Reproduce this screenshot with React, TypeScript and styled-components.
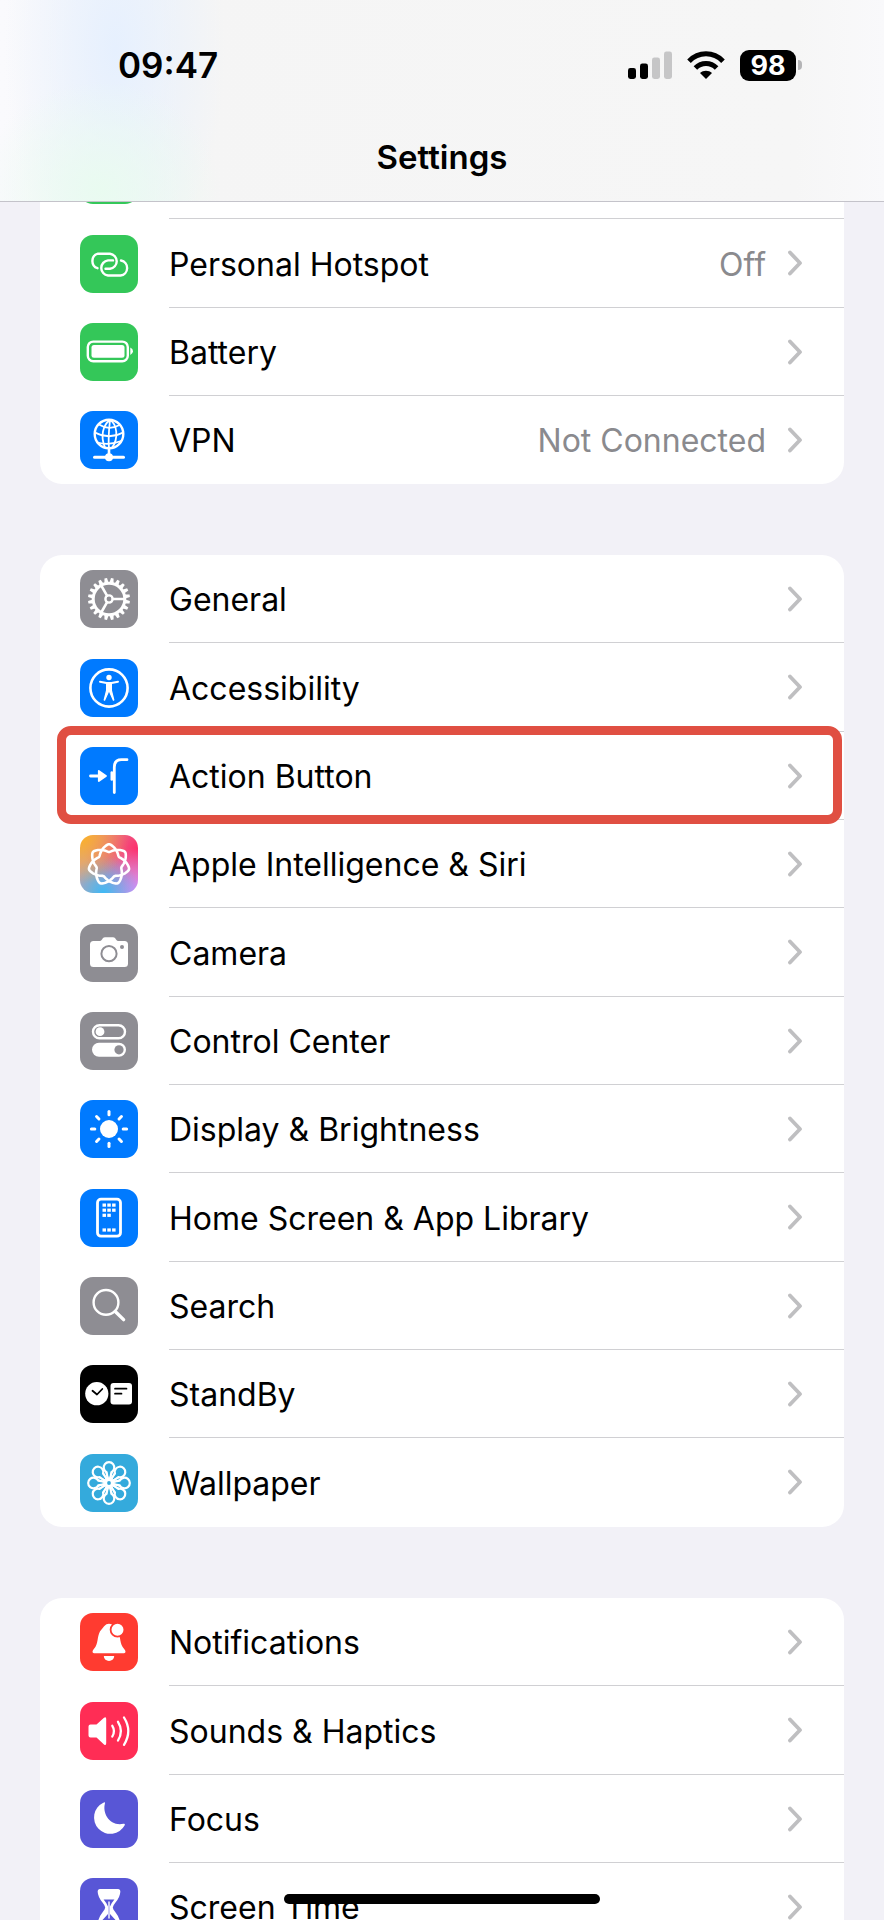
import React from 'react';
import styled, { createGlobalStyle, css } from 'styled-components';

const colors = {
    page: '#f2f1f7',
    card: '#ffffff',
    text: '#000000',
    secondary: '#8a8a8e',
    chevron: '#bfbfc1',
    separator: '#d0d0d3',
    highlight: '#e04f42',
    green: '#34c759',
    blue: '#007aff',
    gray: '#8e8d93',
    black: '#000000',
    cyan: '#34aadc',
    red: '#ff3b30',
    pink: '#ff2d55',
    indigo: '#5856d6',
};

const siriBackground = `
    radial-gradient(circle at 0% 0%, #ffb020 0%, rgba(255, 160, 50, 0) 60%),
    radial-gradient(circle at 40% 100%, #3db9f5 0%, rgba(61, 185, 245, 0) 55%),
    radial-gradient(circle at 100% 100%, #d78cff 0%, rgba(215, 140, 255, 0) 55%),
    radial-gradient(circle at 100% 25%, #ff2d6b 0%, rgba(255, 45, 107, 0) 75%),
    #d0a0a8
`;

const GlobalStyle = createGlobalStyle`
    body {
        background: ${colors.page};
        color: ${colors.text};
        font-family: Inter, 'Liberation Sans', sans-serif;
        margin: 0;
    }
`;

const Screen = styled.div`
    box-sizing: border-box;
    height: 100vh;
    overflow: hidden;
    padding: 131px 40px 0;
`;

const Header = styled.header`
    background:
        radial-gradient(ellipse 120px 110px at 100px 190px, #e9fbf0 0%, rgba(233, 251, 240, 0) 100%),
        radial-gradient(ellipse 110px 240px at 115px 50px, #e6f0fe 0%, rgba(230, 240, 254, 0) 100%),
        linear-gradient(90deg, #fafafd 0, #f5f5f5 180px, #f6f6f6 90%, #f9f9fb 100%);
    border-bottom: 1px solid #c4c3ca;
    box-sizing: border-box;
    height: 202px;
    left: 0;
    position: fixed;
    right: 0;
    top: 0;
    z-index: 2;
`;

const StatusBar = styled.div`
    align-items: center;
    display: flex;
    height: 130px;
    justify-content: space-between;
    padding: 0 82px 0 118px;
`;

const Time = styled.time`
    font-size: 35px;
    font-weight: 600;
    line-height: 40px;
`;

const StatusIcons = styled.div`
    align-items: center;
    display: flex;
    gap: 15px;
`;

const BatteryLevel = styled.div`
    align-items: center;
    display: flex;
    gap: 2px;
`;

const BatteryBody = styled.span`
    background: ${colors.black};
    border-radius: 9px;
    color: #ffffff;
    font-size: 27px;
    font-weight: 700;
    line-height: 31px;
    text-align: center;
    width: 56px;
`;

const BatteryCap = styled.span`
    background: #b4b4b6;
    border-radius: 0 4px 4px 0;
    height: 10px;
    width: 4px;
`;

const Title = styled.h1`
    font-size: 33px;
    font-weight: 600;
    line-height: 40px;
    margin: 7px 0 0;
    text-align: center;
`;

const Group = styled.ul`
    background: ${colors.card};
    border-radius: 22px;
    list-style: none;
    margin: 0 0 71px;
    padding: 0;
`;

const Item = styled.li<{ $highlighted?: boolean }>`
    height: 88px;
    position: relative;

    &:nth-child(3n + 2) {
        height: 89px;
    }

    ${({ $highlighted }) => $highlighted && css`
        &::after {
            border: 9px solid ${colors.highlight};
            border-radius: 14px;
            content: '';
            inset: -6px 2px -4px 17px;
            pointer-events: none;
            position: absolute;
            z-index: 1;
        }
    `}
`;

const RowLink = styled.a`
    align-items: center;
    color: inherit;
    display: flex;
    gap: 31px;
    height: 100%;
    padding-left: 40px;
    text-decoration: none;
`;

const IconTile = styled.span<{ $background: string }>`
    background: ${({ $background }) => $background};
    border-radius: 13px;
    flex-shrink: 0;
    height: 58px;
    width: 58px;

    svg {
        display: block;
    }
`;

const RowBody = styled.span`
    align-items: center;
    border-bottom: 1px solid ${colors.separator};
    box-sizing: border-box;
    display: flex;
    flex: 1;
    height: 100%;
    padding-right: 42px;

    ${Item}:last-child & {
        border-bottom-color: transparent;
    }
`;

const Label = styled.span`
    flex: 1;
    font-size: 32px;
    line-height: 40px;
    padding-top: 3px;
    white-space: nowrap;
`;

const Value = styled.span`
    color: ${colors.secondary};
    font-size: 32px;
    line-height: 40px;
    margin-right: 22px;
    padding-top: 3px;
`;

const HomeIndicator = styled.div`
    background: ${colors.black};
    border-radius: 5px;
    bottom: 16px;
    height: 10px;
    left: 50%;
    position: fixed;
    transform: translateX(-50%);
    width: 316px;
    z-index: 3;
`;

const Glyph = ({ children }: { children?: React.ReactNode }) => (
    <svg
        width="58"
        height="58"
        viewBox="0 0 58 58"
        fill="none"
        stroke="#fff"
        strokeWidth="2.4"
        strokeLinecap="round"
        strokeLinejoin="round"
        aria-hidden="true"
    >
        {children}
    </svg>
);

const angles = (count: number) => Array.from({ length: count }, (_, i) => (360 / count) * i);

const HotspotGlyph = () => (
    <Glyph>
        <path d="M17.5 33.2A7.6 7.6 0 0 1 18 18.7H30A7.6 7.6 0 0 1 30 33.8H25.5" />
        <path d="M33 25.4H28A7.6 7.6 0 0 0 28 40.5H40.5A7.6 7.6 0 0 0 41 25.5" />
    </Glyph>
);

const BatteryGlyph = () => (
    <Glyph>
        <rect x="7.8" y="18.6" width="40" height="19.6" rx="5.5" strokeWidth="2.4" />
        <rect x="11.5" y="22" width="33" height="12.8" rx="2.5" fill="#fff" stroke="none" />
        <path d="M50.3 24.5Q53 25.8 53 28.3T50.3 32Z" fill="#fff" stroke="none" />
    </Glyph>
);

const VpnGlyph = () => (
    <Glyph>
        <g strokeWidth="1.8">
            <circle cx="29" cy="23" r="14.3" strokeWidth="2.4" />
            <path d="M30 9C23 14 20 25 25 36.5M30 9C37 13 39 27 32 36.8M30 9C29 18 28 28 29 37" />
            <path d="M19 13.5Q29 20 39.5 14M15 21.5Q29 29 43 21.5M17.5 31.5Q29 35 41 30" />
            <path d="M29 38V46" strokeWidth="2.6" />
            <path d="M14.5 46.3H43.5" strokeWidth="3" />
        </g>
        <circle cx="29" cy="46.3" r="4" fill="#fff" stroke="none" />
    </Glyph>
);

const GearGlyph = () => (
    <Glyph>
        <circle cx="29" cy="29" r="15.8" strokeWidth="3" />
        {angles(20).map((a) => (
            <path key={a} d="M45 26.9L50 27.7V30.3L45 31.1Z" fill="#fff" stroke="none" transform={`rotate(${a + 9} 29 29)`} />
        ))}
        <circle cx="29" cy="29" r="3.6" strokeWidth="2.4" />
        {[0, 120, 240].map((a) => (
            <path key={a} d="M33 29H44" strokeWidth="2.6" transform={`rotate(${a} 29 29)`} />
        ))}
    </Glyph>
);

const AccessibilityGlyph = () => (
    <Glyph>
        <circle cx="29" cy="29" r="18.6" strokeWidth="2.6" />
        <circle cx="29" cy="18.5" r="2.7" fill="#fff" stroke="none" />
        <path d="M20 22.8L26.5 24H31.5L38 22.8" strokeWidth="2" />
        <path d="M26.6 23.8H31.4V31.5L33.8 41L33.4 41.2L29.5 32.4H28.5L24.6 41.2L24.2 41L26.6 31.5Z" fill="#fff" strokeWidth="1.2" />
    </Glyph>
);

const ActionGlyph = () => (
    <Glyph>
        <path d="M10.5 29H20" strokeWidth="2.8" />
        <path d="M18.8 24L26 29L18.8 34Z" fill="#fff" strokeWidth="1.8" />
        <path d="M34.3 45.5V20Q34.3 12.7 41.5 12.7H47" strokeWidth="2.8" />
        <path d="M31.8 25.5V32.5" strokeWidth="2.6" />
    </Glyph>
);

// Seven lobes traced by one line that goes round the centre twice.
const rosette = Array.from({ length: 280 }, (_, i) => {
    const t = (i / 280) * Math.PI * 4;
    const theta = t - 0.03 * Math.sin(3.5 * t) - 0.05 * Math.sin(7 * t) - Math.PI / 2;
    const r = 16.6 + 3.9 * Math.cos(3.5 * t);
    return `${(29 + r * Math.cos(theta)).toFixed(2)} ${(29.7 + r * Math.sin(theta)).toFixed(2)}`;
}).join('L');

const SiriGlyph = () => (
    <Glyph>
        <path d={`M${rosette}Z`} strokeWidth="2.6" />
    </Glyph>
);

const CameraGlyph = () => (
    <Glyph>
        <path
            d="M13.5 17H19.5Q21 17 22 15.4L23 14Q23.8 13.2 25 13.2H33Q34.2 13.2 35 14L36 15.4Q37 17 38.5 17H44.5Q48 17 48 20.5V39.5Q48 43 44.5 43H13.5Q10 43 10 39.5V20.5Q10 17 13.5 17Z"
            fill="#fff"
            stroke="none"
        />
        <circle cx="29" cy="29.7" r="7.6" stroke={colors.gray} strokeWidth="2" />
        <circle cx="42" cy="23" r="2" fill={colors.gray} stroke="none" />
    </Glyph>
);

const ControlGlyph = () => (
    <Glyph>
        <rect x="13" y="13.2" width="32" height="13" rx="6.5" strokeWidth="2.4" />
        <circle cx="20" cy="19.7" r="4.4" fill="#fff" stroke="none" />
        <rect x="12" y="30.8" width="34" height="14" rx="7" fill="#fff" stroke="none" />
        <circle cx="39" cy="37.8" r="4.6" fill={colors.gray} stroke="none" />
    </Glyph>
);

const BrightnessGlyph = () => (
    <Glyph>
        <circle cx="29" cy="29" r="9" fill="#fff" stroke="none" />
        {angles(8).map((a) => (
            <path key={a} d="M43.2 29H46.6" strokeWidth="3" transform={`rotate(${a} 29 29)`} />
        ))}
    </Glyph>
);

const HomeScreenGlyph = () => (
    <Glyph>
        <rect x="17.5" y="10.2" width="23" height="37" rx="3.5" strokeWidth="2.8" />
        {[
            [22.5, 14.5], [27.3, 14.5], [32.1, 14.5],
            [22.5, 19.6], [27.3, 19.6], [32.1, 19.6],
            [22.5, 24.7], [27.3, 24.7],
            [22.5, 39.4], [27.3, 39.4], [32.1, 39.4],
        ].map(([x, y]) => (
            <rect key={`${x}-${y}`} x={x} y={y} width="3.5" height="3.2" fill="#fff" stroke="none" />
        ))}
    </Glyph>
);

const SearchGlyph = () => (
    <Glyph>
        <circle cx="26" cy="25.4" r="12.4" strokeWidth="2.4" />
        <path d="M35.5 34.8L43.6 42.6" strokeWidth="3.4" />
    </Glyph>
);

const StandByGlyph = () => (
    <Glyph>
        <circle cx="16.8" cy="28.7" r="11.6" fill="#fff" stroke="none" />
        <path d="M12.5 25.8L17 29.5L22.3 24" stroke="#000" strokeWidth="1.8" />
        <rect x="30.5" y="18" width="21.5" height="21.5" rx="3" fill="#fff" stroke="none" />
        <path d="M35 23.7H46.5M35 28.7H41.5" stroke="#000" strokeWidth="1.7" />
    </Glyph>
);

const WallpaperGlyph = () => (
    <Glyph>
        {angles(8).map((a) => (
            <g key={a} transform={`rotate(${a} 29 29)`}>
                <path d="M27.8 25.5L26.6 18.2A5.3 5.3 0 1 1 31.4 18.2L30.2 25.5" strokeWidth="2.2" />
                <path d="M29 25.5L32.6 17.4M29 25.5L25.4 17.4" strokeWidth="1.2" />
            </g>
        ))}
        <circle cx="29" cy="29" r="2.8" fill={colors.cyan} strokeWidth="1.8" />
    </Glyph>
);

const BellGlyph = () => (
    <Glyph>
        <path
            d="M29 10.8C33 10.8 34.5 14 36.5 16.5C40.8 21 39.5 29 42.5 33.8C43.5 35.6 45.5 37 45.5 38.8Q45.5 40.2 44 40.2H14Q12.5 40.2 12.5 38.8C12.5 37 14.5 35.6 15.5 33.8C18.5 29 17 21 21.5 16.5C24 14 25 10.8 29 10.8Z"
            fill="#fff"
            stroke="none"
        />
        <path d="M23.8 43H34.2A5.2 5 0 0 1 23.8 43Z" fill="#fff" stroke="none" />
        <circle cx="37.5" cy="16.7" r="6.9" fill="#fff" stroke={colors.red} strokeWidth="1.8" />
    </Glyph>
);

const SpeakerGlyph = () => (
    <Glyph>
        <path
            d="M10.5 22.5H16.5L24 15.8Q26.2 14.3 26.2 17V41.3Q26.2 44 24 42.5L16.5 35.5H10.5Q8.5 35.5 8.5 33.5V24.5Q8.5 22.5 10.5 22.5Z"
            fill="#fff"
            stroke="none"
        />
        <path d="M32.3 23.8Q35.6 29 32.3 34.5M38 19.8Q43.8 29 38 38.5M44 15.5Q52.6 29 44 42.8" strokeWidth="2.3" />
    </Glyph>
);

const MoonGlyph = () => (
    <Glyph>
        <path
            d="M25 13C22 24 30 36.5 43.5 33.8Q45.5 33.3 44.7 35.2A16.3 16.3 0 1 1 23.3 12.8Q25.4 11.6 25 13Z"
            fill="#fff"
            stroke="none"
        />
    </Glyph>
);

const HourglassGlyph = () => (
    <Glyph>
        <path
            d="M20 12H38Q39.5 12 39.3 14C39 22 31.8 25 31.8 29.5S39 37 39 45V47H19V45C19 37 26.2 34 26.2 29.5S19 22 18.7 14Q18.5 12 20 12Z"
            fill="#fff"
            strokeWidth="2"
        />
        <path d="M23.6 21.5H34.4Q31 25.5 30 28.5V36L36 42.5V45H22V42.5L28 36V28.5Q27 25.5 23.6 21.5Z" fill={colors.indigo} stroke="none" />
        <path d="M29 24V40" strokeWidth="1.4" />
    </Glyph>
);

const Chevron = () => (
    <svg width="14" height="26" viewBox="0 0 14 26" fill="none" aria-hidden="true">
        <path d="M2 2.5L12 13L2 23.5" stroke={colors.chevron} strokeWidth="3.8" strokeLinecap="round" strokeLinejoin="round" />
    </svg>
);

const SignalIcon = () => (
    <svg width="44" height="28" viewBox="0 0 44 28" aria-hidden="true">
        <rect x="0" y="17" width="8" height="11" rx="2.4" />
        <rect x="12" y="12.5" width="8" height="15.5" rx="2.4" />
        <rect x="24" y="6.5" width="8" height="21.5" rx="2.4" fill="#c6c6c7" />
        <rect x="36" y="0.5" width="8" height="27.5" rx="2.4" fill="#c6c6c7" />
    </svg>
);

const WifiIcon = () => (
    <svg width="38" height="28" viewBox="0 0 38 28" fill="none" aria-hidden="true">
        <path d="M2 10.2C11.6 0.4 26.4 0.4 36 10.2" stroke="#000" strokeWidth="5" />
        <path d="M8.4 17C14.4 11 23.6 11 29.6 17" stroke="#000" strokeWidth="5" />
        <path d="M19 28L13 22C16.4 19 21.6 19 25 22Z" fill="#000" />
    </svg>
);

interface SettingsItem {
    background: string;
    glyph: React.ReactNode;
    highlighted?: boolean;
    label?: string;
    value?: string;
}

const groups: SettingsItem[][] = [
    [
        { background: colors.green, glyph: <Glyph /> },
        { background: colors.green, glyph: <HotspotGlyph />, label: 'Personal Hotspot', value: 'Off' },
        { background: colors.green, glyph: <BatteryGlyph />, label: 'Battery' },
        { background: colors.blue, glyph: <VpnGlyph />, label: 'VPN', value: 'Not Connected' },
    ],
    [
        { background: colors.gray, glyph: <GearGlyph />, label: 'General' },
        { background: colors.blue, glyph: <AccessibilityGlyph />, label: 'Accessibility' },
        { background: colors.blue, glyph: <ActionGlyph />, label: 'Action Button', highlighted: true },
        { background: siriBackground, glyph: <SiriGlyph />, label: 'Apple Intelligence & Siri' },
        { background: colors.gray, glyph: <CameraGlyph />, label: 'Camera' },
        { background: colors.gray, glyph: <ControlGlyph />, label: 'Control Center' },
        { background: colors.blue, glyph: <BrightnessGlyph />, label: 'Display & Brightness' },
        { background: colors.blue, glyph: <HomeScreenGlyph />, label: 'Home Screen & App Library' },
        { background: colors.gray, glyph: <SearchGlyph />, label: 'Search' },
        { background: colors.black, glyph: <StandByGlyph />, label: 'StandBy' },
        { background: colors.cyan, glyph: <WallpaperGlyph />, label: 'Wallpaper' },
    ],
    [
        { background: colors.red, glyph: <BellGlyph />, label: 'Notifications' },
        { background: colors.pink, glyph: <SpeakerGlyph />, label: 'Sounds & Haptics' },
        { background: colors.indigo, glyph: <MoonGlyph />, label: 'Focus' },
        { background: colors.indigo, glyph: <HourglassGlyph />, label: 'Screen Time' },
    ],
];

const SettingsRow = ({ background, glyph, highlighted, label, value }: SettingsItem) => (
    <Item $highlighted={highlighted}>
        <RowLink href="#">
            <IconTile $background={background}>{glyph}</IconTile>
            <RowBody>
                <Label>{label}</Label>
                {value && <Value>{value}</Value>}
                <Chevron />
            </RowBody>
        </RowLink>
    </Item>
);

const App = () => (
    <>
        <GlobalStyle />
        <Header>
            <StatusBar>
                <Time>09:47</Time>
                <StatusIcons>
                    <SignalIcon />
                    <WifiIcon />
                    <BatteryLevel>
                        <BatteryBody>98</BatteryBody>
                        <BatteryCap />
                    </BatteryLevel>
                </StatusIcons>
            </StatusBar>
            <Title>Settings</Title>
        </Header>
        <Screen>
            {groups.map((items, index) => (
                <Group key={index}>
                    {items.map((item, i) => <SettingsRow key={i} {...item} />)}
                </Group>
            ))}
        </Screen>
        <HomeIndicator />
    </>
);

export default App;
